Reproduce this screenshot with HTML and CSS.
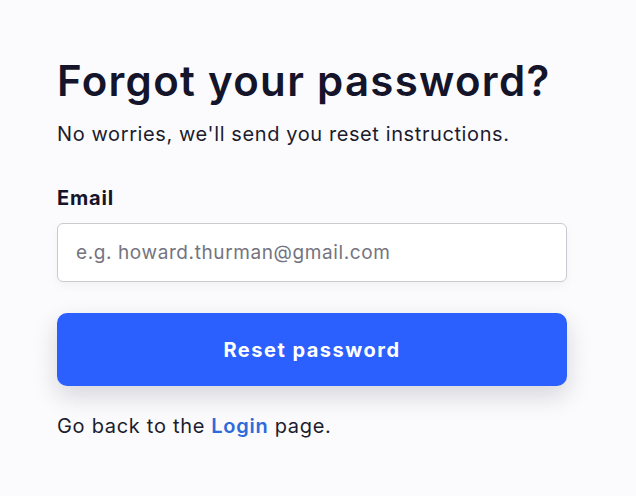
FILE: index.html
```html
<!DOCTYPE html>
<html>
<head>
<meta charset="utf-8">
<link rel="stylesheet" href="styles.css">
</head>
<body>
<main class="card">
  <h1 class="title">Forgot your password?</h1>
  <p class="subtitle">No worries, we'll send you reset instructions.</p>
  <form class="form">
    <label class="label" for="email">Email</label>
    <input class="input" id="email" type="email" placeholder="e.g. howard.thurman@gmail.com">
    <button class="button" type="button">Reset password</button>
  </form>
  <p class="back">Go back to the <a class="link" href="#">Login</a> page.</p>
</main>
</body>
</html>
```
FILE: styles.css
```css
html, body {
  margin: 0;
  padding: 0;
  background: #fbfbfd;
}
body {
  font-family: Inter, "Noto Sans", sans-serif;
  color: #14142b;
}
.card {
  width: 510px;
  padding: 53px 0 0 57px;
  display: flex;
  flex-direction: column;
}
.title {
  margin: 0;
  font-size: 42px;
  font-weight: 600;
  letter-spacing: 1.3px;
  line-height: 56px;
  color: #14142b;
}
.subtitle {
  margin: 11px 0 0;
  font-size: 20px;
  letter-spacing: 0.6px;
  line-height: 28px;
  color: #1c1c2e;
}
.form {
  display: flex;
  flex-direction: column;
  margin-top: 37px;
}
.label {
  font-size: 20px;
  font-weight: 700;
  letter-spacing: 0.8px;
  line-height: 26px;
}
.input {
  margin-top: 12px;
  height: 59px;
  box-sizing: border-box;
  border: 1px solid #c9c9cf;
  border-radius: 6px;
  padding: 0 18px;
  font-family: inherit;
  font-size: 19px;
  letter-spacing: 0.6px;
  background: #fff;
  box-shadow: 0 4px 10px rgba(20, 20, 43, 0.04);
}
.input::placeholder {
  color: #74747f;
}
.button {
  margin-top: 31px;
  height: 73px;
  border: none;
  border-radius: 10px;
  background: #2b60ff;
  color: #fff;
  font-family: inherit;
  font-size: 20px;
  font-weight: 700;
  letter-spacing: 1.5px;
  box-shadow: 0 10px 24px rgba(20, 20, 43, 0.16);
}
.back {
  margin: 26px 0 0;
  font-size: 20px;
  letter-spacing: 0.7px;
  line-height: 28px;
  color: #1c1c2e;
}
.link {
  color: #2f6ad9;
  font-weight: 600;
  text-decoration: none;
}
```
